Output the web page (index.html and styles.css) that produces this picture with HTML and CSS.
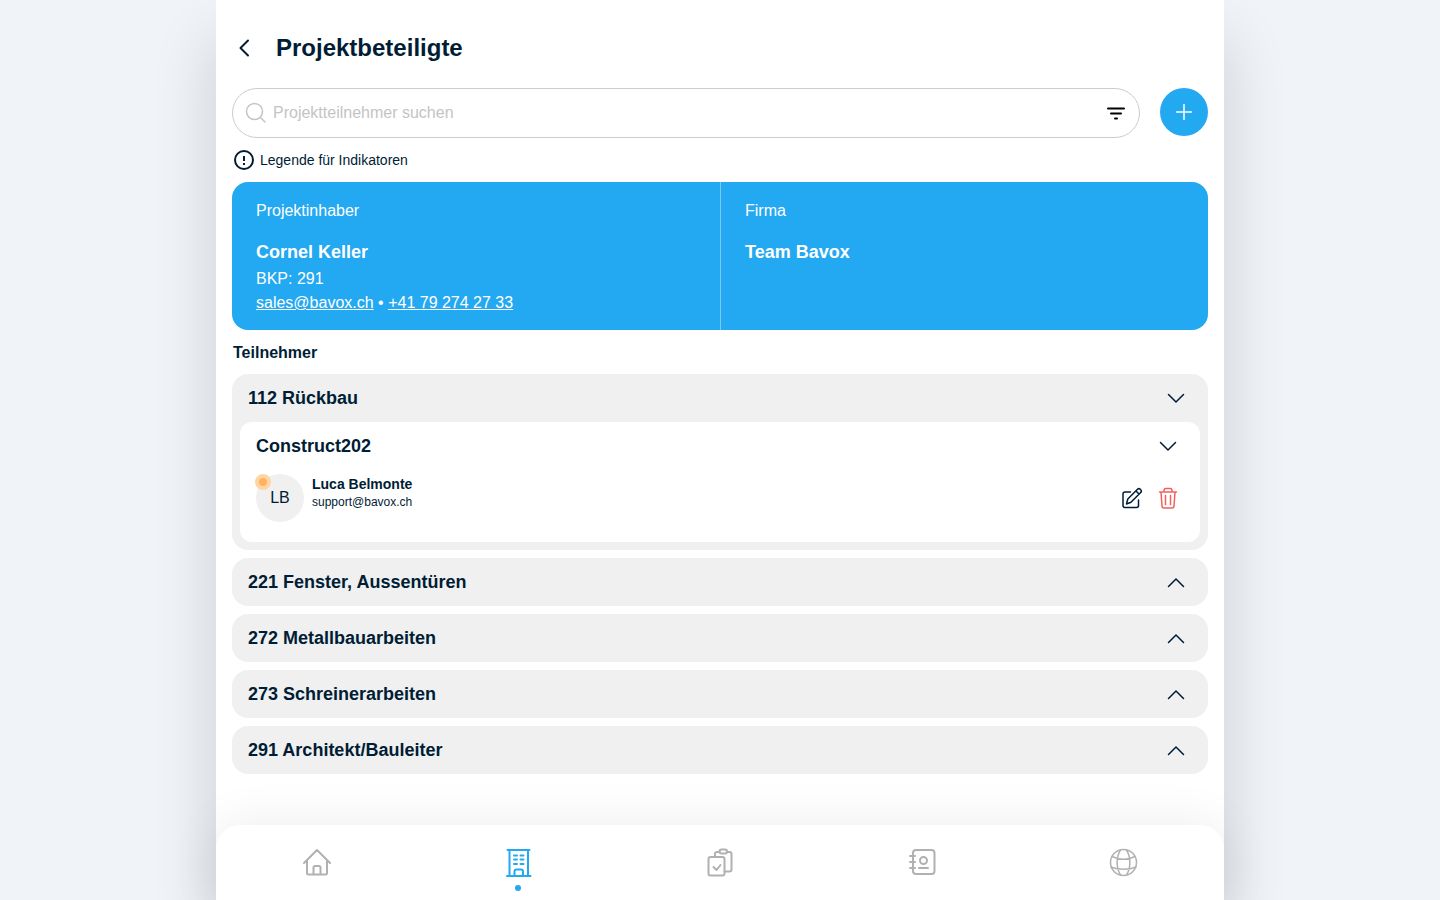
FILE: index.html
```html
<!DOCTYPE html>
<html lang="de">
  <head>
    <meta charset="UTF-8" />
    <meta name="viewport" content="width=device-width, initial-scale=1.0" />
    <title>Projektbeteiligte</title>
    <link rel="stylesheet" href="styles.css">
  </head>
  <body>
    <div class="app">
      <header class="header">
        <button class="icon-btn" aria-label="Zurück">
          <svg width="24" height="24" viewBox="0 0 24 24"><path d="M16 4.500 8.500 12 16 19.500" stroke-width="2" /></svg>
        </button>
        <h1>Projektbeteiligte</h1>
      </header>

      <main class="content">
        <div class="toolbar">
          <div class="search">
            <svg class="search-icon" width="24" height="24" viewBox="0 0 24 24"><circle cx="10.500" cy="10.500" r="8" /><path d="M16.500 16.500l4.500 4.500" /></svg>
            <input type="text" aria-label="Projektteilnehmer suchen" placeholder="Projektteilnehmer suchen" />
            <button class="icon-btn filter-btn" aria-label="Filter">
              <svg width="24" height="24" viewBox="0 0 24 24"><path d="M4 7.500h16M7 12.500h10M11 17.500h2" /></svg>
            </button>
          </div>
          <button class="add-btn" aria-label="Teilnehmer hinzufügen">
            <svg width="24" height="24" viewBox="0 0 24 24"><path d="M12 4.500v15M4.500 12h15" /></svg>
          </button>
        </div>

        <button class="legend">
          <svg width="24" height="24" viewBox="0 0 24 24"><circle cx="12" cy="12" r="9" /><path d="M12 8v5M12 15v2" /></svg>
          Legende für Indikatoren
        </button>

        <section class="owner">
          <div class="owner-col">
            <p class="owner-label">Projektinhaber</p>
            <h2>Cornel Keller</h2>
            <p>BKP: 291</p>
            <p><a href="mailto:sales@bavox.ch">sales@bavox.ch</a> • <a href="tel:+41792742733">+41 79 274 27 33</a></p>
          </div>
          <div class="owner-col">
            <p class="owner-label">Firma</p>
            <h2>Team Bavox</h2>
          </div>
        </section>

        <h2 class="section-title">Teilnehmer</h2>

        <div class="groups">
          <section class="group">
            <button class="group-head" aria-expanded="true">
              112 Rückbau
              <svg width="24" height="24" viewBox="0 0 24 24"><path d="M4.500 8.500l7.500 7.500 7.500-7.500" /></svg>
            </button>
            <div class="company">
              <button class="group-head" aria-expanded="true">
                Construct202
                <svg width="24" height="24" viewBox="0 0 24 24"><path d="M4.500 8.500l7.500 7.500 7.500-7.500" /></svg>
              </button>
              <div class="member">
                <div class="avatar">LB<span class="status"></span></div>
                <div class="member-info">
                  <h3>Luca Belmonte</h3>
                  <p>support@bavox.ch</p>
                </div>
                <div class="member-actions">
                  <button class="icon-btn" aria-label="Bearbeiten">
                    <svg width="24" height="24" viewBox="0 0 24 24"><path d="M10.500 6H5a2 2 0 0 0-2 2v11.500a2 2 0 0 0 2 2h11.500a2 2 0 0 0 2-2v-5.500M6.500 18l1.300-5L17.500 3.300a2 2 0 0 1 2.800 0l.4.400a2 2 0 0 1 0 2.800L11 16.200zM16 5l3 3" /></svg>
                  </button>
                  <button class="icon-btn delete-btn" aria-label="Löschen">
                    <svg width="24" height="24" viewBox="0 0 24 24"><path d="M3.500 6h17M8 5.500V4.500a2 2 0 0 1 2-2h4a2 2 0 0 1 2 2v1M5 6l1 14a2 2 0 0 0 2 2h8a2 2 0 0 0 2-2L19 6M9.500 9.500v9M14.500 9.500v9" /></svg>
                  </button>
                </div>
              </div>
            </div>
          </section>
          <section class="group">
            <button class="group-head" aria-expanded="false">
              221 Fenster, Aussentüren
              <svg width="24" height="24" viewBox="0 0 24 24"><path d="M4.500 16.500l7.500-7.500 7.500 7.500" /></svg>
            </button>
          </section>
          <section class="group">
            <button class="group-head" aria-expanded="false">
              272 Metallbauarbeiten
              <svg width="24" height="24" viewBox="0 0 24 24"><path d="M4.500 16.500l7.500-7.500 7.500 7.500" /></svg>
            </button>
          </section>
          <section class="group">
            <button class="group-head" aria-expanded="false">
              273 Schreinerarbeiten
              <svg width="24" height="24" viewBox="0 0 24 24"><path d="M4.500 16.500l7.500-7.500 7.500 7.500" /></svg>
            </button>
          </section>
          <section class="group">
            <button class="group-head" aria-expanded="false">
              291 Architekt/Bauleiter
              <svg width="24" height="24" viewBox="0 0 24 24"><path d="M4.500 16.500l7.500-7.500 7.500 7.500" /></svg>
            </button>
          </section>
        </div>
      </main>

      <nav class="tabbar">
        <a href="#" aria-label="Start">
          <svg width="32" height="32" viewBox="0 0 32 32"><path d="M3 16 16 3l13 13M6 13.500v12.500a1.500 1.500 0 0 0 1.500 1.500h17A1.500 1.500 0 0 0 26 26V13.500M12.500 27.500v-7a1.500 1.500 0 0 1 1.500-1.500h4a1.500 1.500 0 0 1 1.500 1.500v7" /></svg>
        </a>
        <a href="#" class="active" aria-label="Projekte">
          <svg width="32" height="32" viewBox="0 0 32 32"><path d="M5.500 3h22M7.500 3v26M26 3v26M5 29h23.500M12.500 28.500v-4a2 2 0 0 1 2-2h4.500a2 2 0 0 1 2 2v4M12 8.500h3M18.500 8.500h3M12 12.500h3M18.500 12.500h3M12 17h3M18.500 17h3" /></svg>
        </a>
        <a href="#" aria-label="Aufgaben">
          <svg width="32" height="32" viewBox="0 0 32 32"><rect x="4.500" y="10" width="16" height="18.500" rx="2" /><path d="M9.500 20l3 3 4-5M11 9.500V7a2 2 0 0 1 2-2h2.500M23 5h2.500a2 2 0 0 1 2 2v15.500a2 2 0 0 1-2 2h-5" /><rect x="15.500" y="2.500" width="7.500" height="4" rx="2" /></svg>
        </a>
        <a href="#" aria-label="Kontakte">
          <svg width="32" height="32" viewBox="0 0 32 32"><rect x="7" y="3" width="21.500" height="24" rx="3" /><circle cx="17.500" cy="13.500" r="3.500" /><path d="M13 21h9M4 9h5M4 15h5M4 21h5" /></svg>
        </a>
        <a href="#" aria-label="Sprache">
          <svg class="thin" width="32" height="32" viewBox="0 0 32 32"><circle cx="16.500" cy="15.500" r="13" /><path d="M13.500 3c-4.500 7-4.500 18 0 25M19.500 3c4.500 7 4.500 18 0 25M5 9.500c7 3.500 16 3.500 23 0M4 20c7 3 18 3 25 0" /></svg>
        </a>
      </nav>
    </div>
  </body>
</html>
```

FILE: styles.css
```css
* {
  box-sizing: border-box;
}
body {
  margin: 0;
  font-family: "Liberation Sans", Arial, Helvetica, sans-serif;
  font-size: 16px;
  line-height: 24px;
  color: #001d35;
  background-color: #f0f4f9;
}
h1, h2, h3, p {
  margin: 0;
}
button {
  padding: 0;
  border: none;
  background: none;
  font: inherit;
  color: inherit;
  cursor: pointer;
}
svg {
  display: block;
  flex-shrink: 0;
  fill: none;
  stroke: currentColor;
  stroke-width: 1.5;
  stroke-linecap: round;
  stroke-linejoin: round;
}
.app {
  display: flex;
  flex-direction: column;
  width: 70%;
  min-height: 100vh;
  margin: 0 auto;
  background-color: #fff;
  box-shadow: 0 40px 60px rgba(0, 0, 0, 0.16);
}
.header {
  display: flex;
  align-items: center;
  gap: 20px;
  padding: 32px 16px 24px;
}
.header h1 {
  font-size: 24px;
  line-height: 32px;
}
.content {
  flex: 1;
  padding: 0 16px 16px;
}
.toolbar {
  display: flex;
  gap: 20px;
}
.search {
  flex: 1;
  display: flex;
  align-items: center;
  height: 50px;
  padding: 0 11px;
  border: 1px solid #ccc;
  border-radius: 25px;
}
.search-icon {
  color: #c4c4c4;
}
.search input {
  flex: 1;
  min-width: 0;
  padding: 0 5px;
  border: none;
  outline: none;
  background: none;
  font: inherit;
  color: inherit;
}
.search input::placeholder {
  color: #c4c4c4;
}
.filter-btn {
  color: #000;
}
.filter-btn svg {
  stroke-width: 2;
}
.add-btn {
  display: flex;
  align-items: center;
  justify-content: center;
  width: 48px;
  height: 48px;
  border-radius: 50%;
  background-color: #23a8f2;
  color: #fff;
}
.legend {
  display: flex;
  align-items: center;
  gap: 4px;
  margin: 10px 0;
  font-size: 14px;
}
.legend svg {
  stroke-width: 2;
  stroke-linecap: butt;
}
.owner {
  display: grid;
  grid-template-columns: 1fr 1fr;
  border-radius: 16px;
  background-color: #23a8f2;
  color: #fff;
}
.owner-col {
  padding: 17px 24px 15px;
}
.owner-col + .owner-col {
  border-left: 1px solid #7bcbf7;
}
.owner-label {
  margin-bottom: 17px;
}
.owner h2 {
  margin-bottom: 3px;
  font-size: 18px;
  line-height: 24px;
}
.owner a {
  color: inherit;
}
.section-title {
  padding: 11px 1px 9px;
  font-size: 16px;
  line-height: 24px;
}
.groups {
  display: flex;
  flex-direction: column;
  gap: 8px;
}
.group {
  overflow: hidden;
  border-radius: 16px;
  background-color: #f0f0f0;
}
.group-head {
  display: flex;
  align-items: center;
  justify-content: space-between;
  width: 100%;
  height: 48px;
  padding: 0 20px 0 16px;
  font-size: 18px;
  font-weight: bold;
  text-align: left;
}
.company {
  margin: 0 8px 8px;
  border-radius: 12px;
  background-color: #fff;
}
.member {
  display: flex;
  gap: 8px;
  padding: 4px 20px 20px 16px;
}
.avatar {
  position: relative;
  display: flex;
  align-items: center;
  justify-content: center;
  width: 48px;
  height: 48px;
  border-radius: 50%;
  background-color: #f0f0f0;
}
.status {
  position: absolute;
  top: 0;
  left: -1px;
  width: 16px;
  height: 16px;
  border: 4px solid #ffd5a3;
  border-radius: 50%;
  background-color: #ffb263;
}
.member-info {
  flex: 1;
}
.member-info h3 {
  font-size: 14px;
  line-height: 20px;
}
.member-info p {
  font-size: 12px;
  line-height: 16px;
}
.member-actions {
  display: flex;
  align-items: center;
  gap: 12px;
}
.delete-btn {
  color: #f75f5f;
}
.tabbar {
  position: sticky;
  bottom: 0;
  display: grid;
  grid-template-columns: repeat(5, 1fr);
  justify-items: center;
  padding: 22px 0 9px;
  border-radius: 24px 24px 0 0;
  background-color: #fff;
  box-shadow: 0 0 50px rgba(0, 0, 0, 0.08);
}
.tabbar a {
  display: flex;
  flex-direction: column;
  align-items: center;
  gap: 6px;
  height: 44px;
  color: #b1b1b1;
}
.tabbar svg {
  stroke-width: 2;
}
.tabbar .thin {
  stroke-width: 1.5;
}
.tabbar .active {
  color: #23a8f2;
}
.tabbar .active::after {
  content: "";
  width: 6px;
  height: 6px;
  border-radius: 50%;
  background-color: #23a8f2;
}
```
